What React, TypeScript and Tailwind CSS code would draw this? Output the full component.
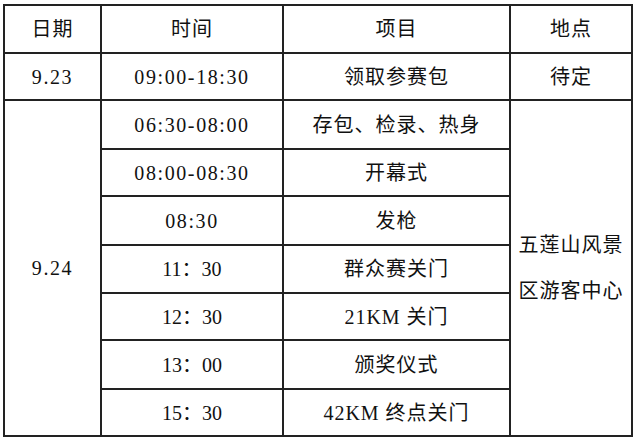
const font = "font-['Liberation_Serif','Noto_Sans_CJK_SC',serif]";

interface Slot {
	time: string;
	item: string;
	h: string;
	mono?: boolean;
}

const day24: Slot[] = [
	{ time: "06:30-08:00", item: "存包、检录、热身", h: "h-[49px]", mono: true },
	{ time: "08:00-08:30", item: "开幕式", h: "h-[47px]", mono: true },
	{ time: "08:30", item: "发枪", h: "h-[49px]", mono: true },
	{ time: "11：30", item: "群众赛关门", h: "h-[48px]" },
	{ time: "12：30", item: "21KM 关门", h: "h-[47px]" },
	{ time: "13：00", item: "颁奖仪式", h: "h-[49px]" },
	{ time: "15：30", item: "42KM 终点关门", h: "h-[47px]" },
];

const cell = "border-2 border-[#222] text-center align-middle p-0";
const cjk = "tracking-[0.05em]";
const mono = "tracking-[0.08em]";

export default function App() {
	return (
		<div className={`bg-white w-[640px] h-[443px] pl-[3px] pt-[4px] text-[20px] text-[#111] ${font}`}>
			<table className="border-collapse w-[630px] table-fixed">
				<colgroup>
					<col className="w-[97px]" />
					<col className="w-[182px]" />
					<col className="w-[227px]" />
					<col className="w-[122px]" />
				</colgroup>
				<tbody>
					<tr className="h-[48px]">
						<td className={`${cell} ${cjk}`}>日期</td>
						<td className={`${cell} ${cjk}`}>时间</td>
						<td className={`${cell} ${cjk}`}>项目</td>
						<td className={`${cell} ${cjk}`}>地点</td>
					</tr>
					<tr className="h-[47px]">
						<td className={`${cell} ${mono}`}>9.23</td>
						<td className={`${cell} ${mono}`}>09:00-18:30</td>
						<td className={`${cell} ${cjk}`}>领取参赛包</td>
						<td className={`${cell} ${cjk}`}>待定</td>
					</tr>
					{day24.map((s, i) => (
						<tr key={s.time} className={s.h}>
							{i === 0 && (
								<td rowSpan={day24.length} className={`${cell} ${mono}`}>
									9.24
								</td>
							)}
							<td className={`${cell} ${s.mono ? mono : ""}`}>{s.time}</td>
							<td className={`${cell} ${cjk}`}>{s.item}</td>
							{i === 0 && (
								<td rowSpan={day24.length} className={`${cell} ${cjk} leading-[46px]`}>
									五莲山风景
									<br />
									区游客中心
								</td>
							)}
						</tr>
					))}
				</tbody>
			</table>
		</div>
	);
}
